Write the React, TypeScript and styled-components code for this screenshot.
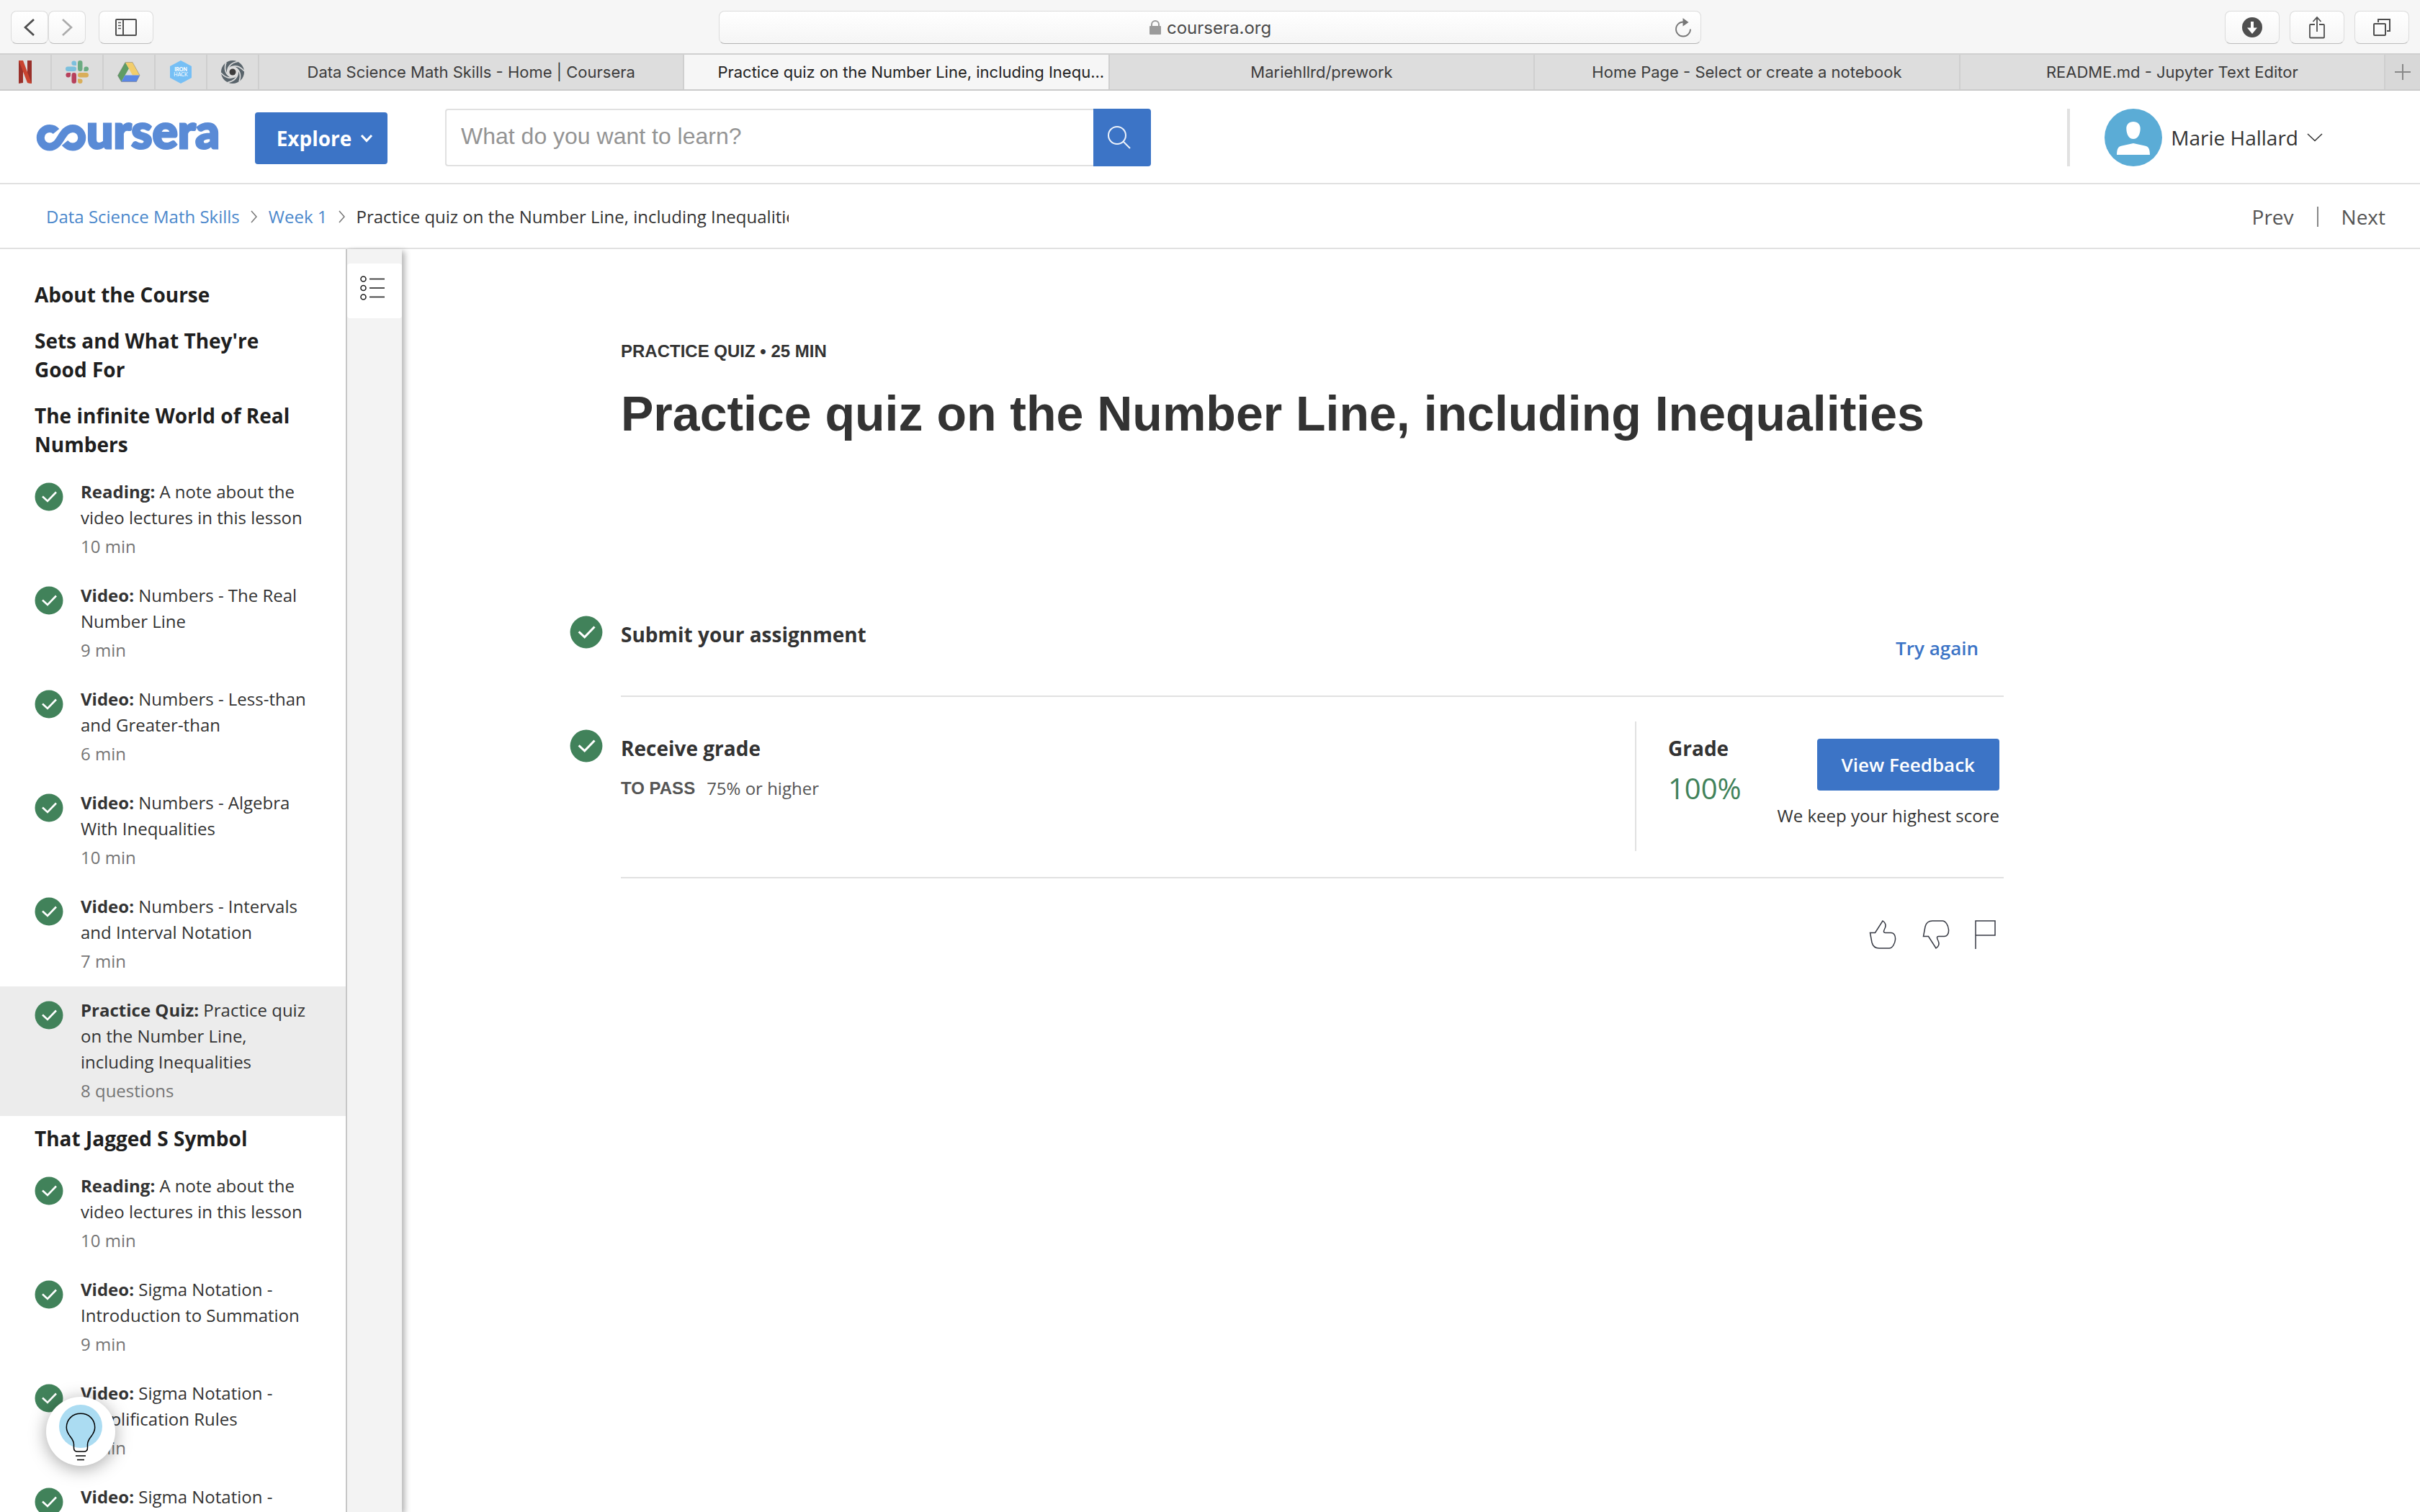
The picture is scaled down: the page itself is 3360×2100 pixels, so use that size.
import React from "react";
import styled, { createGlobalStyle } from "styled-components";

const sans = `"Open Sans", "Noto Sans", sans-serif`;
const arial = `"Liberation Sans", Arial, sans-serif`;
const system = `Inter, "Liberation Sans", sans-serif`;

const color = {
  blue: "#3c74c6",
  link: "#4b88cc",
  green: "#41825a",
  rule: "#e1e1e1",
  text: "#333333",
  muted: "#757575",
};

const GlobalStyle = createGlobalStyle`
  *, *::before, *::after { box-sizing: border-box; }
  body { margin: 0; background: #ffffff; color: ${color.text}; font-family: ${sans}; }
  button, input { font: inherit; color: inherit; }
  button { border: 0; padding: 0; background: none; cursor: pointer; }
  a { color: inherit; text-decoration: none; }
  h1, h2, h3, p, ul { margin: 0; padding: 0; }
  li { list-style: none; }
  svg { display: block; flex: none; }
`;

const Page = styled.div`
  display: flex;
  flex-direction: column;
  height: 100vh;
`;

/* Browser toolbar */

const Toolbar = styled.div`
  display: grid;
  grid-template-columns: 1fr minmax(0, 1364px) 1fr;
  padding: 15px 15px 13px;
  background: #f6f6f6;
  border-bottom: 2px solid #d0d0d0;
`;

const ToolGroup = styled.div<{ $gap: number; $end?: boolean }>`
  display: flex;
  gap: ${(p) => p.$gap}px;
  justify-content: ${(p) => (p.$end ? "flex-end" : "flex-start")};
`;

const ToolButton = styled.button<{ $wide?: boolean }>`
  display: flex;
  align-items: center;
  justify-content: center;
  width: ${(p) => (p.$wide ? 76 : 52)}px;
  height: 46px;
  border: 1px solid #dcdcdc;
  border-bottom-color: #bcbcbc;
  border-radius: 8px;
  background: linear-gradient(#ffffff, #f6f6f6);
`;

const AddressBar = styled.div`
  display: grid;
  grid-template-columns: 36px 1fr 36px;
  align-items: center;
  height: 46px;
  border: 1px solid #dcdcdc;
  border-bottom-color: #b4b4b4;
  border-radius: 8px;
  background: linear-gradient(#ffffff, #f5f5f5);
`;

const Address = styled.label`
  grid-column: 2;
  display: flex;
  align-items: center;
  justify-content: center;
  gap: 8px;
`;

const AddressInput = styled.input`
  width: 144px;
  padding: 2px 0 0;
  border: 0;
  outline: 0;
  background: transparent;
  font-family: ${system};
  font-size: 24px;
  line-height: 32px;
  color: #4a4a4a;
`;

const TabStrip = styled.nav`
  display: flex;
  height: 50px;
  background: #dddddd;
  border-bottom: 2px solid #cbcbcb;
`;

const PinnedTab = styled.a`
  display: flex;
  align-items: center;
  justify-content: center;
  width: 72px;
  border-right: 2px solid #cfcfcf;
`;

const Tab = styled.a<{ $active?: boolean }>`
  flex: 1 1 0;
  min-width: 0;
  padding: ${(p) => (p.$active ? "0 10px 0 46px" : "0 28px")};
  border-right: 2px solid #cfcfcf;
  background: ${(p) => (p.$active ? "#f6f6f6" : "transparent")};
  color: ${(p) => (p.$active ? "#222222" : "#3c3c3c")};
  font-family: ${system};
  font-size: 22px;
  line-height: 48px;
  text-align: center;
  white-space: nowrap;
  overflow: hidden;
`;

const NewTab = styled.button`
  display: flex;
  align-items: center;
  justify-content: center;
  width: 48px;
  background: #d8d8d8;
`;

/* Site header */

const Header = styled.header`
  display: flex;
  align-items: center;
  height: 130px;
  padding: 2px 135px 0 50px;
  border-bottom: 2px solid ${color.rule};
`;

const Explore = styled.button`
  display: flex;
  align-items: center;
  justify-content: center;
  gap: 12px;
  height: 72px;
  width: 184px;
  margin: 2px 80px 0 50px;
  padding-left: 10px;
  border-radius: 4px;
  background: ${color.blue};
  color: #ffffff;
  font-size: 28px;
  font-weight: 700;
  line-height: 40px;
`;

const SearchForm = styled.form`
  display: flex;
  flex: 0 1 980px;
  height: 80px;
`;

const SearchInput = styled.input`
  flex: 1;
  min-width: 0;
  padding: 0 20px 4px;
  border: 2px solid ${color.rule};
  border-right: 0;
  border-radius: 4px 0 0 4px;
  outline: 0;
  font-family: ${arial};
  font-size: 32px;
  &::placeholder {
    color: #949494;
    opacity: 1;
  }
`;

const SearchButton = styled.button`
  display: flex;
  align-items: center;
  justify-content: center;
  width: 80px;
  padding-right: 8px;
  border-radius: 0 4px 4px 0;
  background: ${color.blue};
`;

const Account = styled.div`
  display: flex;
  margin-left: auto;
  padding-left: 48px;
  border-left: 4px solid ${color.rule};
`;

const AccountButton = styled.button`
  display: flex;
  align-items: center;
  gap: 12px;
  height: 80px;
  font-size: 28px;
  line-height: 40px;
`;

const SubHeader = styled.div`
  display: flex;
  align-items: center;
  justify-content: space-between;
  height: 90px;
  padding: 2px 48px 0 64px;
  border-bottom: 2px solid ${color.rule};
`;

const Breadcrumb = styled.nav`
  display: flex;
  align-items: center;
  gap: 15px;
  font-size: 24px;
  line-height: 36px;
  a {
    color: ${color.link};
  }
`;

const Crumb = styled.span`
  max-width: 600px;
  white-space: nowrap;
  overflow: hidden;
`;

const Pager = styled.nav`
  display: flex;
  align-items: center;
  gap: 32px;
  color: #555555;
  font-size: 28px;
  line-height: 40px;
`;

const PagerRule = styled.span`
  width: 2px;
  height: 28px;
  background: #888888;
`;

/* Course outline */

const Body = styled.div`
  display: flex;
  flex: 1;
  min-height: 0;
`;

const Sidebar = styled.aside`
  flex: none;
  width: 482px;
  padding-top: 32px;
  border-right: 2px solid #c7c7c7;
  overflow-y: auto;
  scrollbar-width: none;
`;

const SectionTitle = styled.h2`
  padding: 11px 48px 13px;
  color: #1f1f1f;
  font-size: 28px;
  font-weight: 700;
  line-height: 40px;
`;

const Lesson = styled.a<{ $current?: boolean }>`
  display: flex;
  gap: 24px;
  padding: 15px 48px 17px;
  background: ${(p) => (p.$current ? "#ececec" : "transparent")};
  font-size: 24px;
  line-height: 36px;
  svg {
    margin-top: 5px;
  }
`;

const LessonMeta = styled.p`
  margin-top: 4px;
  color: ${color.muted};
`;

const Rail = styled.div`
  flex: none;
  z-index: 1;
  width: 76px;
  padding-top: 20px;
  background: #f3f3f3;
  box-shadow: 4px 3px 8px rgba(0, 0, 0, 0.3);
  clip-path: inset(-6px -16px 0 0);
`;

const RailButton = styled.button`
  display: flex;
  align-items: center;
  width: 76px;
  height: 76px;
  padding: 0 0 8px 18px;
  border-radius: 4px;
  background: #ffffff;
`;

/* Assignment */

const Main = styled.main`
  flex: 1;
  min-width: 0;
  padding: 126px 48px 0 304px;
`;

const Content = styled.div`
  max-width: 1920px;
`;

const Eyebrow = styled.p`
  font-family: ${arial};
  font-size: 24px;
  font-weight: 700;
  line-height: 32px;
`;

const Title = styled.h1`
  margin: 30px 0 196px;
  font-family: ${arial};
  font-size: 68px;
  font-weight: 700;
  line-height: 80px;
`;

const Step = styled.section`
  display: flex;
  gap: 25px;
  margin-left: -71px;
`;

const StepIcon = styled.div`
  padding-top: 45px;
`;

const StepBody = styled.div`
  display: flex;
  flex: 1;
  justify-content: space-between;
  padding: 34px 0 36px;
  border-bottom: 2px solid ${color.rule};
`;

const StepText = styled.div`
  padding-top: 17px;
`;

const StepTitle = styled.h3`
  font-size: 28px;
  font-weight: 700;
  line-height: 40px;
`;

const PassLine = styled.p`
  display: flex;
  gap: 16px;
  margin-top: 18px;
  color: #555555;
  font-size: 24px;
  line-height: 36px;
  strong {
    font-family: ${arial};
  }
`;

const TryAgain = styled.div`
  padding: 26px 35px 0 0;
`;

const TextButton = styled.button`
  height: 60px;
  color: ${color.blue};
  font-size: 26px;
  font-weight: 600;
  line-height: 40px;
`;

const GradePanel = styled.div`
  display: flex;
  justify-content: space-between;
  width: 512px;
  height: 180px;
  padding: 0 6px 0 44px;
  border-left: 2px solid ${color.rule};
`;

const Score = styled.p`
  margin-top: 8px;
  color: ${color.green};
  font-size: 40px;
  line-height: 56px;
`;

const Feedback = styled.div`
  display: flex;
  flex-direction: column;
  align-items: flex-end;
  gap: 17px;
  padding-top: 24px;
  font-size: 24px;
  line-height: 36px;
`;

const PrimaryButton = styled.button`
  height: 72px;
  padding: 0 34px;
  border-radius: 4px;
  background: ${color.blue};
  color: #ffffff;
  font-size: 26px;
  font-weight: 600;
  line-height: 40px;
`;

const Reactions = styled.div`
  display: flex;
  justify-content: flex-end;
  gap: 34px;
  padding: 58px 10px 0 0;
`;

const HelpButton = styled.button`
  position: fixed;
  left: 64px;
  bottom: 64px;
  z-index: 2;
  width: 96px;
  height: 96px;
  border-radius: 50%;
  background: #ffffff;
  box-shadow: 0 4px 24px rgba(0, 0, 0, 0.35);
`;

/* Drawings */

const CheckIcon = ({ size }: { size: number }) => (
  <svg width={size} height={size} viewBox="0 0 40 40" aria-hidden="true">
    <circle cx="20" cy="20" r="19.5" fill={color.green} />
    <path d="M11 19.5l7 6.5 12-12.5" fill="none" stroke="#fff" strokeWidth="2.6" />
  </svg>
);

const Chevron = ({ w, h, d, stroke, width }: { w: number; h: number; d: string; stroke: string; width: number }) => (
  <svg width={w} height={h} viewBox={`0 0 ${w} ${h}`} fill="none" stroke={stroke} strokeWidth={width} aria-hidden="true">
    <path d={d} />
  </svg>
);

const CrumbArrow = () => <Chevron w={10} h={18} d="M1 1l7 8-7 8" stroke="#777" width={1.5} />;

const CourseraLogo = () => (
  <svg width="254" height="36" viewBox="0 0 254 36" overflow="visible" role="img" aria-label="Coursera">
    <path
      d="M28 9.500C26 7 22.500 5.500 19 5.500A12.700 12.700 0 0 0 19 31C35 31 34.500 5.500 51 5.500A12.700 12.700 0 0 1 51 31C46.500 31 43 29 40 25.500"
      fill="none"
      stroke="#5a8bd6"
      strokeWidth="11"
    />
    <text x="70" y="33" fill="#5a8bd6" stroke="#5a8bd6" strokeWidth="3" fontFamily="Lato, sans-serif" fontWeight="900" fontSize="66">
      ursera
    </text>
  </svg>
);

const NetflixIcon = () => (
  <svg width="18" height="32" viewBox="0 0 18 32" aria-hidden="true">
    <path d="M0 0h6v31l-6 1zM12 0h6v32l-6-1z" fill="#99302a" />
    <path d="M0 0h6l12 32-6-1z" fill="#c9432f" />
  </svg>
);

const SlackIcon = () => (
  <svg width="32" height="32" viewBox="0 0 32 32" aria-hidden="true">
    <g fill="#7cc0dd">
      <path d="M15 7h-3.300A3.300 3.300 0 1 1 15 3.700z" />
      <rect x="0" y="8.500" width="15" height="6.500" rx="3.250" />
    </g>
    <g fill="#6bab82">
      <rect x="17" y="0" width="6.500" height="15" rx="3.250" />
      <path d="M25.500 15v-3.300A3.300 3.300 0 1 1 28.700 15z" />
    </g>
    <g fill="#d9ae5a">
      <rect x="17" y="17" width="15" height="6.500" rx="3.250" />
      <path d="M17 25.500h3.300A3.300 3.300 0 1 1 17 28.700z" />
    </g>
    <g fill="#b7415c">
      <rect x="8.500" y="17" width="6.500" height="15" rx="3.250" />
      <path d="M7 17v3.300A3.300 3.300 0 1 1 3.300 17z" />
    </g>
  </svg>
);

const DriveIcon = () => (
  <svg width="32" height="28" viewBox="0 0 32 28" aria-hidden="true">
    <path d="M11 .5l5 8.500L5.500 27.500.5 19z" fill="#5f9c65" />
    <path d="M11 .5h10L31 18.500H21z" fill="#f2cd6b" />
    <path d="M10.500 18.500H31L26.500 27.500h-21z" fill="#5b87e4" />
    <path d="M11 .5h10L31 18.500 26.500 27.500h-21L.5 19z" fill="none" stroke="#777" strokeOpacity=".6" strokeWidth=".8" />
  </svg>
);

const IronhackIcon = () => (
  <svg width="30" height="32" viewBox="0 0 30 32" aria-hidden="true">
    <path d="M15 0l15 8v16l-15 8L0 24V8z" fill="#76bff5" />
    <g fill="#fff" fontFamily="Lato, sans-serif" fontSize="7" textAnchor="middle">
      <text x="15" y="15" fontWeight="900">IRON</text>
      <text x="15" y="22">HACK</text>
    </g>
  </svg>
);

const SwirlIcon = () => (
  <svg width="32" height="32" viewBox="-16 -16 32 32" aria-hidden="true">
    <circle r="16" fill="#59646b" />
    <circle r="8" fill="#dddddd" />
    {[0, 60, 120, 180, 240, 300].map((a) => (
      <path key={a} d="M-7 1C-8-7-2-13 7-14.500" fill="none" stroke="#dddddd" strokeWidth="1.700" transform={`rotate(${a})`} />
    ))}
    <circle r="4.500" fill="#3d3d3d" />
  </svg>
);

const SidebarIcon = () => (
  <svg width="30" height="24" viewBox="0 0 30 24" fill="none" stroke="#4f4f4f" strokeWidth="2" aria-hidden="true">
    <rect x="1" y="1" width="28" height="22" rx="1" />
    <path d="M11 1v22" />
    <path d="M4 5.500h4M4 9.500h4M4 13.500h4" strokeWidth="1.500" />
  </svg>
);

const LockIcon = () => (
  <svg width="16" height="20" viewBox="0 0 16 20" aria-hidden="true">
    <rect y="8" width="16" height="12" rx="1" fill="#9b9b9b" />
    <path d="M3 9V6a5 5 0 0 1 10 0v3" fill="none" stroke="#9b9b9b" strokeWidth="2" />
  </svg>
);

const ReloadIcon = () => (
  <svg width="24" height="27" viewBox="0 0 24 27" fill="none" aria-hidden="true">
    <path d="M12 5.500A10 10 0 1 0 22 15.500" stroke="#777" strokeWidth="1.800" />
    <path d="M11.500 0l8 6-8 5.500z" fill="#777" />
  </svg>
);

const DownloadIcon = () => (
  <svg width="28" height="28" viewBox="0 0 28 28" aria-hidden="true">
    <circle cx="14" cy="14" r="14" fill="#4f4f4f" />
    <path d="M12 6h4v8.500h5L14 23 7 14.500h5z" fill="#fff" />
  </svg>
);

const ShareIcon = () => (
  <svg width="24" height="32" viewBox="0 0 24 32" fill="none" stroke="#4f4f4f" strokeWidth="1.800" aria-hidden="true">
    <path d="M9 12H3a1 1 0 0 0-1 1v16.500a1 1 0 0 0 1 1h18a1 1 0 0 0 1-1V13a1 1 0 0 0-1-1h-6M12 22V2M6.500 8L12 2l5.500 6" />
  </svg>
);

const WindowsIcon = () => (
  <svg width="24" height="24" viewBox="0 0 24 24" fill="none" stroke="#4f4f4f" strokeWidth="2" aria-hidden="true">
    <rect x="1" y="7" width="16" height="16" rx="1" />
    <path d="M7 5V1h16v16h-4" />
  </svg>
);

const PlusIcon = () => (
  <svg width="22" height="22" viewBox="0 0 22 22" stroke="#888" strokeWidth="2" aria-hidden="true">
    <path d="M11 0v22M0 11h22" />
  </svg>
);

const SearchIcon = () => (
  <svg width="32" height="32" viewBox="0 0 32 32" fill="none" stroke="#eef3fb" strokeWidth="2" aria-hidden="true">
    <circle cx="13" cy="13" r="12" />
    <path d="M21.500 21.500l9.500 9.500" />
  </svg>
);

const Avatar = () => (
  <svg width="80" height="80" viewBox="0 0 80 80" aria-hidden="true">
    <circle cx="40" cy="40" r="40" fill="#5bacd6" />
    <path d="M40 18c6 0 10 4 9.700 10C49.400 36 46 42 40 42s-9.400-6-9.700-14C30 22 34 18 40 18z" fill="#fff" />
    <path d="M17 64c.3-8 1.500-11.500 7-12.500L40 48l16 3.500c5.500 1 6.700 4.500 7 12.500z" fill="#fff" />
  </svg>
);

const ListIcon = () => (
  <svg width="34" height="34" viewBox="0 0 34 34" fill="none" stroke="#222" strokeWidth="1.600" aria-hidden="true">
    {[4.5, 17, 29.5].map((y) => (
      <React.Fragment key={y}>
        <circle cx="4.500" cy={y} r="3.500" />
        <path d={`M13 ${y}h21`} />
      </React.Fragment>
    ))}
  </svg>
);

const thumb = "M2.500 17.500h7L20 1c4.500 3 5 7 2.500 11.500-1.500 3-1.500 5 1 5h8c4 0 6.500 4 6 9.500-.5 5.500-4 12-8.500 12H15c-7 0-9-4-10-8z";

const ThumbIcon = ({ down }: { down?: boolean }) => (
  <svg width="40" height="40" viewBox="0 0 40 40" fill="none" stroke="#373a44" strokeWidth="1.500" aria-hidden="true">
    <path d={thumb} transform={down ? "matrix(1 0 0 -1 0 40)" : undefined} />
  </svg>
);

const FlagIcon = () => (
  <svg width="30" height="40" viewBox="0 0 30 40" fill="none" stroke="#373a44" strokeWidth="1.500" aria-hidden="true">
    <path d="M1 40V1h27v20H1" />
  </svg>
);

const BulbIcon = () => (
  <svg width="96" height="96" viewBox="0 0 96 96" fill="none" stroke="#000" strokeWidth="1.500" aria-hidden="true">
    <circle cx="48" cy="41" r="30" fill="#abdcf2" stroke="none" />
    <path d="M38.500 71v-5C38 56 28.300 54 28.300 42.500 28.300 31 37 23.300 48 23.300S67.700 31 67.700 42.500C67.700 54 58 56 57.500 66v5c0 3-2 5-5 5h-9c-3 0-5-2-5-5z" />
    <path d="M41 82h14M43 87.500h10" />
  </svg>
);

/* Data */

type Item = { kind: string; name: string; meta: string; current?: boolean };

const sections: { title: string; items: Item[] }[] = [
  { title: "About the Course", items: [] },
  { title: "Sets and What They're Good For", items: [] },
  {
    title: "The infinite World of Real Numbers",
    items: [
      { kind: "Reading", name: "A note about the video lectures in this lesson", meta: "10 min" },
      { kind: "Video", name: "Numbers - The Real Number Line", meta: "9 min" },
      { kind: "Video", name: "Numbers - Less-than and Greater-than", meta: "6 min" },
      { kind: "Video", name: "Numbers - Algebra With Inequalities", meta: "10 min" },
      { kind: "Video", name: "Numbers - Intervals and Interval Notation", meta: "7 min" },
      { kind: "Practice Quiz", name: "Practice quiz on the Number Line, including Inequalities", meta: "8 questions", current: true },
    ],
  },
  {
    title: "That Jagged S Symbol",
    items: [
      { kind: "Reading", name: "A note about the video lectures in this lesson", meta: "10 min" },
      { kind: "Video", name: "Sigma Notation - Introduction to Summation", meta: "9 min" },
      { kind: "Video", name: "Sigma Notation - Simplification Rules", meta: "7 min" },
      { kind: "Video", name: "Sigma Notation -", meta: "" },
    ],
  },
];

const pinned = [
  { name: "Netflix", icon: <NetflixIcon /> },
  { name: "Slack", icon: <SlackIcon /> },
  { name: "Google Drive", icon: <DriveIcon /> },
  { name: "Ironhack", icon: <IronhackIcon /> },
  { name: "Swirl", icon: <SwirlIcon /> },
];

const tabs = [
  { title: "Data Science Math Skills - Home | Coursera" },
  { title: "Practice quiz on the Number Line, including Inequ...", active: true },
  { title: "Mariehllrd/prework" },
  { title: "Home Page - Select or create a notebook" },
  { title: "README.md - Jupyter Text Editor" },
];

export default function App() {
  return (
    <Page>
      <GlobalStyle />
      <Toolbar>
        <ToolGroup $gap={18}>
          <ToolGroup $gap={0}>
            <ToolButton aria-label="Back">
              <Chevron w={16} h={26} d="M14 2L2 13l12 11" stroke="#4f4f4f" width={2.8} />
            </ToolButton>
            <ToolButton aria-label="Forward">
              <Chevron w={16} h={26} d="M2 2l12 11L2 24" stroke="#ababab" width={2.6} />
            </ToolButton>
          </ToolGroup>
          <ToolButton $wide aria-label="Show sidebar">
            <SidebarIcon />
          </ToolButton>
        </ToolGroup>
        <AddressBar>
          <Address>
            <LockIcon />
            <AddressInput aria-label="Address" defaultValue="coursera.org" />
          </Address>
          <button aria-label="Reload">
            <ReloadIcon />
          </button>
        </AddressBar>
        <ToolGroup $gap={14} $end>
          <ToolButton $wide aria-label="Downloads">
            <DownloadIcon />
          </ToolButton>
          <ToolButton $wide aria-label="Share">
            <ShareIcon />
          </ToolButton>
          <ToolButton $wide aria-label="Show tabs">
            <WindowsIcon />
          </ToolButton>
        </ToolGroup>
      </Toolbar>
      <TabStrip aria-label="Tabs">
        {pinned.map((p) => (
          <PinnedTab key={p.name} href="#" aria-label={p.name}>
            {p.icon}
          </PinnedTab>
        ))}
        {tabs.map((t) => (
          <Tab key={t.title} href="#" $active={t.active}>
            {t.title}
          </Tab>
        ))}
        <NewTab aria-label="New tab">
          <PlusIcon />
        </NewTab>
      </TabStrip>

      <Header>
        <a href="#" aria-label="Coursera home">
          <CourseraLogo />
        </a>
        <Explore>
          Explore
          <Chevron w={18} h={12} d="M2 2l7 7.500L16 2" stroke="#fff" width={3} />
        </Explore>
        <SearchForm role="search">
          <SearchInput aria-label="Search" placeholder="What do you want to learn?" />
          <SearchButton type="button" aria-label="Submit search">
            <SearchIcon />
          </SearchButton>
        </SearchForm>
        <Account>
          <AccountButton>
            <Avatar />
            Marie Hallard
            <Chevron w={22} h={12} d="M1 1l10 9.500L21 1" stroke="#333" width={1.5} />
          </AccountButton>
        </Account>
      </Header>

      <SubHeader>
        <Breadcrumb aria-label="Breadcrumb">
          <a href="#">Data Science Math Skills</a>
          <CrumbArrow />
          <a href="#">Week 1</a>
          <CrumbArrow />
          <Crumb>Practice quiz on the Number Line, including Inequalities</Crumb>
        </Breadcrumb>
        <Pager aria-label="Items">
          <a href="#">Prev</a>
          <PagerRule />
          <a href="#">Next</a>
        </Pager>
      </SubHeader>

      <Body>
        <Sidebar>
          {sections.map((s) => (
            <section key={s.title}>
              <SectionTitle>{s.title}</SectionTitle>
              <ul>
                {s.items.map((item) => (
                  <li key={item.kind + item.name}>
                    <Lesson href="#" $current={item.current}>
                      <CheckIcon size={40} />
                      <div>
                        <p>
                          <strong>{item.kind}:</strong> {item.name}
                        </p>
                        {item.meta && <LessonMeta>{item.meta}</LessonMeta>}
                      </div>
                    </Lesson>
                  </li>
                ))}
              </ul>
            </section>
          ))}
        </Sidebar>
        <Rail>
          <RailButton aria-label="Course outline">
            <ListIcon />
          </RailButton>
        </Rail>

        <Main>
          <Content>
            <Eyebrow>PRACTICE QUIZ • 25 MIN</Eyebrow>
            <Title>Practice quiz on the Number Line, including Inequalities</Title>
            <Step>
              <StepIcon>
                <CheckIcon size={46} />
              </StepIcon>
              <StepBody>
                <StepText>
                  <StepTitle>Submit your assignment</StepTitle>
                </StepText>
                <TryAgain>
                  <TextButton>Try again</TextButton>
                </TryAgain>
              </StepBody>
            </Step>
            <Step>
              <StepIcon>
                <CheckIcon size={46} />
              </StepIcon>
              <StepBody>
                <StepText>
                  <StepTitle>Receive grade</StepTitle>
                  <PassLine>
                    <strong>TO PASS</strong>
                    <span>75% or higher</span>
                  </PassLine>
                </StepText>
                <GradePanel>
                  <StepText>
                    <StepTitle>Grade</StepTitle>
                    <Score>100%</Score>
                  </StepText>
                  <Feedback>
                    <PrimaryButton>View Feedback</PrimaryButton>
                    <p>We keep your highest score</p>
                  </Feedback>
                </GradePanel>
              </StepBody>
            </Step>
            <Reactions>
              <button aria-label="Like">
                <ThumbIcon />
              </button>
              <button aria-label="Dislike">
                <ThumbIcon down />
              </button>
              <button aria-label="Report an issue">
                <FlagIcon />
              </button>
            </Reactions>
          </Content>
        </Main>
      </Body>
      <HelpButton aria-label="Help">
        <BulbIcon />
      </HelpButton>
    </Page>
  );
}
